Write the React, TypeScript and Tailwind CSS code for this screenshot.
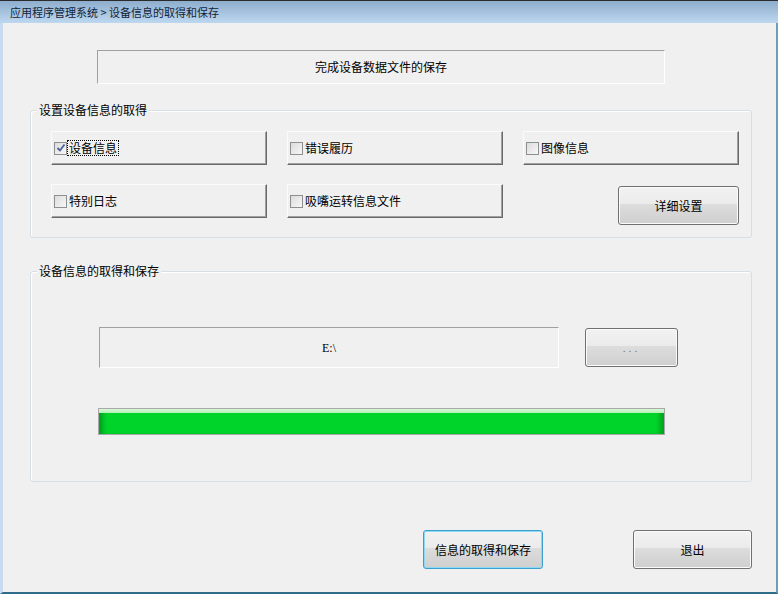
import { ReactNode } from 'react';

const font = { fontFamily: '"Noto Sans CJK SC", "Noto Sans", sans-serif' };

function Sunken({ className, children }: { className: string; children?: ReactNode }) {
  return (
    <div
      className={`flex items-center justify-center border border-t-[#a0a0a0] border-l-[#a0a0a0] border-r-white border-b-white text-[12px] text-black ${className}`}
    >
      {children}
    </div>
  );
}

function CheckButton({ label, checked, focused }: { label: string; checked?: boolean; focused?: boolean }) {
  return (
    <div className="flex h-[34px] w-[216px] items-center border border-t-[#fbfbfb] border-l-[#fbfbfb] border-r-[#696969] border-b-[#696969] pl-[2px] shadow-[inset_-1px_-1px_0_#a0a0a0] bg-[#f0f0f0]">
      <span className="relative flex h-[13px] w-[13px] items-center justify-center border border-[#8e8f8f] bg-[linear-gradient(135deg,#dcdcdc,#f7f7f7)]">
        {checked && (
          <svg width="10" height="10" viewBox="0 0 10 10">
            <path d="M1.5 5 L4 7.5 L8.5 1.5" fill="none" stroke="#4a5f97" strokeWidth="1.8" />
          </svg>
        )}
      </span>
      <span
        className={`ml-[1px] px-[1px] text-[12px] leading-[14px] text-black ${focused ? 'outline outline-1 outline-dotted outline-black' : ''}`}
      >
        {label}
      </span>
    </div>
  );
}

function WinButton({ label, className, focused }: { label: ReactNode; className: string; focused?: boolean }) {
  return (
    <div
      className={`flex items-center justify-center rounded-[3px] border bg-[linear-gradient(to_bottom,#f2f2f2_0%,#ebebeb_45%,#dddddd_45%,#cfcfcf_100%)] text-[12px] text-black ${
        focused ? 'border-[#3c9fd2] shadow-[inset_0_0_0_1px_#8fd8f2]' : 'border-[#707070] shadow-[inset_0_0_0_1px_#fbfbfb]'
      } ${className}`}
    >
      {label}
    </div>
  );
}

function Group({ title, className, children }: { title: string; className: string; children: ReactNode }) {
  return (
    <div className={`relative ml-[27px] w-[722px] rounded-[3px] border border-[#d5dfe5] shadow-[inset_1px_1px_0_#fff] ${className}`}>
      <span className="absolute left-[6px] top-[-9px] bg-[#f0f0f0] px-[2px] text-[12px] leading-[16px] text-black">{title}</span>
      {children}
    </div>
  );
}

export default function App() {
  return (
    <div className="flex h-[594px] w-[778px] flex-col bg-[#f0f0f0]" style={font}>
      <div className="h-[1px] bg-[#2b2b2b]" />
      <div className="flex h-[22px] items-center bg-[linear-gradient(to_bottom,#8eaecd,#bdd7ef)] pl-[10px] text-[11px] text-[#10233a]">
        应用程序管理系统 &gt; 设备信息的取得和保存
      </div>
      <div className="flex flex-1 flex-col border-l-[3px] border-r-2 border-b-2 border-l-[#c7dcf1] border-r-[#6f9db3] border-b-[#2e6d8a]">
        <Sunken className="ml-[94px] mt-[27px] h-[34px] w-[568px]">完成设备数据文件的保存</Sunken>

        <Group title="设置设备信息的取得" className="mt-[26px] h-[128px]">
          <div className="flex flex-col gap-[19px] pl-[20px] pt-[20px]">
            <div className="flex gap-[20px]">
              <CheckButton label="设备信息" checked focused />
              <CheckButton label="错误履历" />
              <CheckButton label="图像信息" />
            </div>
            <div className="flex gap-[20px]">
              <CheckButton label="特别日志" />
              <CheckButton label="吸嘴运转信息文件" />
              <div className="flex w-[216px] justify-end pt-[2px]">
                <WinButton label="详细设置" className="h-[39px] w-[121px]" />
              </div>
            </div>
          </div>
        </Group>

        <Group title="设备信息的取得和保存" className="mt-[33px] h-[211px]">
          <div className="flex gap-[26px] pl-[68px] pt-[55px]">
            <Sunken className="h-[41px] w-[460px]">
              <span style={{ fontFamily: '"Liberation Serif", serif' }}>E:\</span>
            </Sunken>
            <WinButton
              label={<span className="text-[10px] tracking-[3px] text-[#707070]">...</span>}
              className="mt-[1px] h-[39px] w-[93px]"
            />
          </div>
          <div className="ml-[67px] mt-[40px] flex h-[27px] w-[567px] flex-col border border-[#a8a8a8] bg-[#00d42b] shadow-[inset_7px_0_5px_-3px_#00a020,inset_-7px_0_5px_-3px_#00a020]">
            <div className="h-[4px] bg-[linear-gradient(to_bottom,#d8f7d8,#b4efb4)]" />
          </div>
        </Group>

        <div className="mt-[48px] flex gap-[90px] pl-[420px]">
          <WinButton label="信息的取得和保存" className="h-[39px] w-[120px]" focused />
          <WinButton label="退出" className="h-[39px] w-[119px]" />
        </div>
      </div>
    </div>
  );
}
